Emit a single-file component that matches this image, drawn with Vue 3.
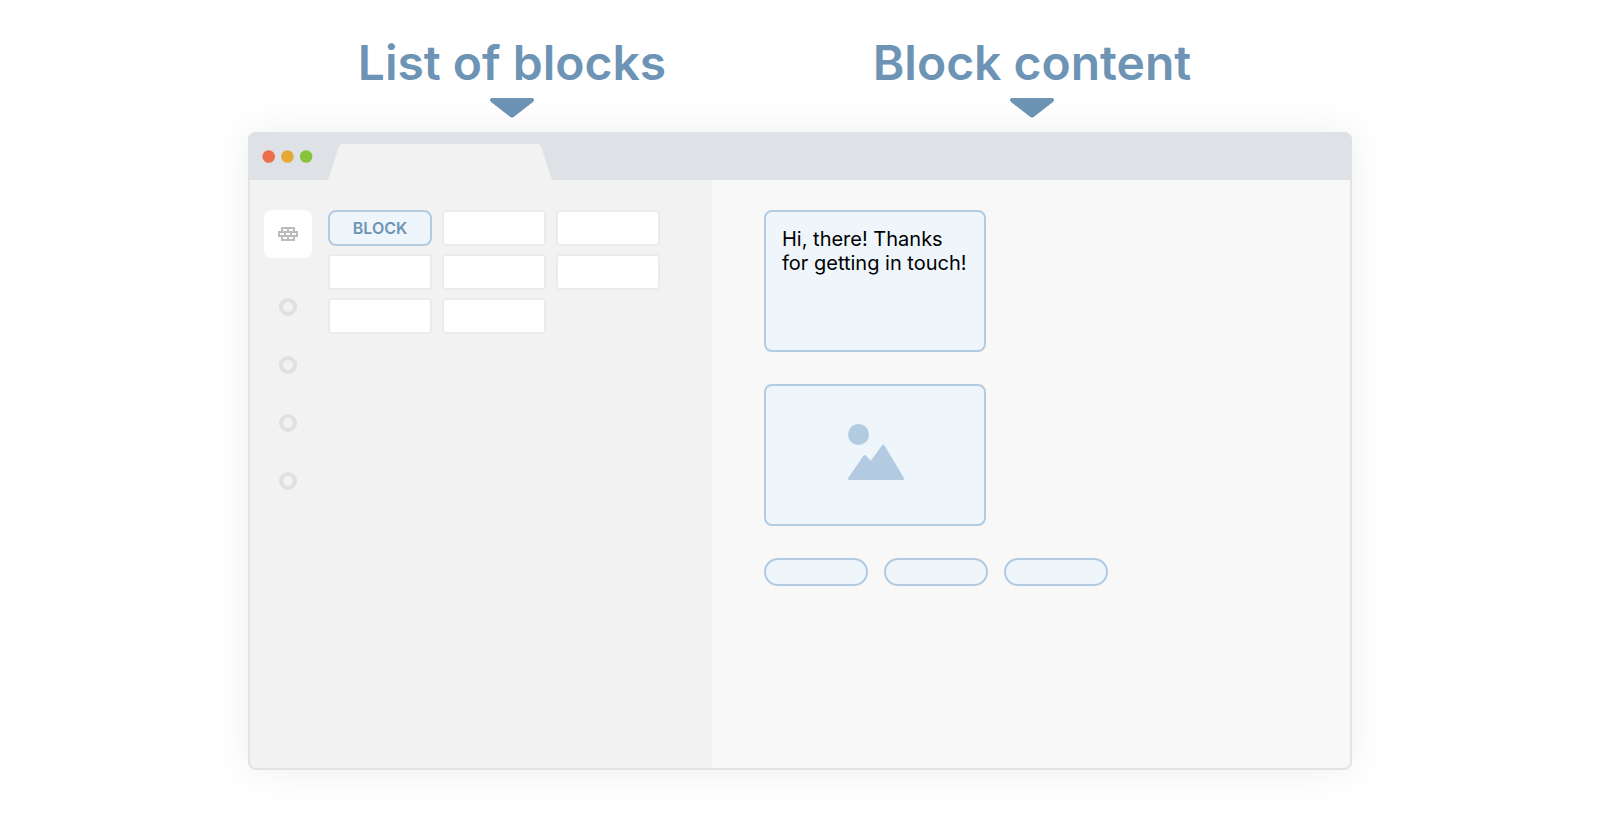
<script setup>
const headings = ['List of blocks', 'Block content']
const blocks = ['BLOCK', '', '', '', '', '', '', '']
const sections = [1, 2, 3, 4]
const replies = [1, 2, 3]
</script>

<template>
  <main class="page">
    <header class="headings">
      <div v-for="title in headings" :key="title" class="heading">
        <h2>{{ title }}</h2>
        <svg class="pointer" viewBox="0 0 44 20" aria-hidden="true">
          <path d="M2 0H42Q44 0 44 2Q44 3 43 4L24 18.700Q22 20.300 20 18.700L1 4Q0 3 0 2Q0 0 2 0Z" />
        </svg>
      </div>
    </header>

    <section class="window">
      <div class="titlebar">
        <svg class="lights" viewBox="0 0 51 13" aria-hidden="true">
          <circle cx="6.700" cy="6.500" r="6.300" fill="#eb6f4b" />
          <circle cx="25.400" cy="6.500" r="6.300" fill="#e7a936" />
          <circle cx="44.100" cy="6.500" r="6.300" fill="#86c43c" />
        </svg>
        <svg class="tab" viewBox="0 0 224 36" aria-hidden="true">
          <path d="M0 36L10.800 3Q11.800 0 15 0H209Q212.200 0 213.200 3L224 36Z" />
        </svg>
      </div>

      <div class="body">
        <div class="left">
          <nav class="rail" aria-label="Sections">
            <button class="tile" type="button" aria-label="Blocks">
              <svg viewBox="0 0 20 14" aria-hidden="true">
                <path fill-rule="evenodd" d="M3 0H17V4H20V10H17V14H3V10H0V4H3ZM5 2V4H9V2ZM11 2V4H15V2ZM2 6V8H6V6ZM8 6V8H12V6ZM14 6V8H18V6ZM5 10V12H9V10ZM11 10V12H15V10Z" />
              </svg>
            </button>
            <button v-for="n in sections" :key="n" class="ring" type="button" :aria-label="`Section ${n}`"></button>
          </nav>
          <div class="blocks">
            <button
              v-for="(label, i) in blocks"
              :key="i"
              type="button"
              class="block"
              :class="{ active: label }"
              :aria-label="label || `Block ${i + 1}`"
            >{{ label }}</button>
          </div>
        </div>

        <div class="right">
          <article class="card message">Hi, there! Thanks<br>for getting in touch!</article>
          <figure class="card image">
            <svg viewBox="0 0 56 56" aria-hidden="true">
              <circle cx="10.500" cy="10.500" r="10.500" />
              <path d="M1.500 54.500L16.700 32.500L23 39L35.200 22.300L54.500 54.500Z" stroke-width="3" stroke-linejoin="round" />
            </svg>
          </figure>
          <div class="replies">
            <button v-for="n in replies" :key="n" class="pill" type="button" :aria-label="`Reply ${n}`"></button>
          </div>
        </div>
      </div>
    </section>
  </main>
</template>

<style>
body {
  margin: 0;
  background: #fff;
}
</style>

<style scoped>
* {
  box-sizing: border-box;
}
button {
  padding: 0;
  font: inherit;
  cursor: pointer;
}
.page {
  display: flex;
  flex-direction: column;
  align-items: center;
  min-height: 100vh;
  padding: 35px 0 46px;
  font-family: Inter, "Liberation Sans", sans-serif;
}
.headings {
  display: grid;
  grid-template-columns: 528fr 512fr 64fr;
  width: 69%;
  margin-bottom: 14px;
}
.heading {
  display: flex;
  flex-direction: column;
  align-items: center;
  gap: 7px;
}
h2 {
  margin: 0;
  font-size: 48px;
  line-height: 56px;
  font-weight: 600;
  color: #6d94b5;
  white-space: nowrap;
}
.pointer {
  width: 44px;
  height: 20px;
  fill: #6d94b5;
}
.window {
  flex: 1;
  display: flex;
  flex-direction: column;
  width: 69%;
  border-radius: 8px;
  background: #e3e3e3;
  box-shadow: 0 0 40px rgba(0, 0, 0, 0.07);
  overflow: hidden;
}
.titlebar {
  display: flex;
  align-items: flex-end;
  gap: 15px;
  height: 48px;
  padding-left: 14px;
  background: #dee1e6;
}
.lights {
  width: 51px;
  height: 13px;
  margin-bottom: 17px;
}
.tab {
  width: 224px;
  height: 36px;
  fill: #f2f2f2;
}
.body {
  flex: 1;
  display: grid;
  grid-template-columns: 42fr 58fr;
  margin: 0 2px 2px;
  border-radius: 0 0 6px 6px;
  overflow: hidden;
}
.left {
  display: flex;
  align-items: flex-start;
  gap: 16px;
  padding: 30px 14px;
  background: #f2f2f2;
}
.rail {
  display: flex;
  flex-direction: column;
  align-items: center;
  gap: 40px;
}
.tile {
  display: grid;
  place-items: center;
  width: 48px;
  height: 48px;
  border: 0;
  border-radius: 8px;
  background: #fff;
}
.tile svg {
  width: 20px;
  height: 14px;
  fill: #bbb;
}
.ring {
  width: 18px;
  height: 18px;
  border: 4px solid #e0e0e0;
  border-radius: 50%;
  background: transparent;
}
.blocks {
  display: grid;
  grid-template-columns: repeat(3, 104px);
  grid-auto-rows: 36px;
  gap: 8px 10px;
}
.block {
  border: 2px solid #ebebeb;
  border-radius: 4px;
  background: #fff;
}
.block.active {
  border-color: #b3cbe0;
  border-radius: 8px;
  background: #eef5fb;
  color: #6d94b5;
  font-size: 16px;
  font-weight: 600;
}
.right {
  display: flex;
  flex-direction: column;
  align-items: flex-start;
  gap: 32px;
  padding: 30px 52px;
  background: #f8f8f8;
}
.card {
  width: 222px;
  height: 142px;
  margin: 0;
  border: 2px solid #b3cbe0;
  border-radius: 8px;
  background: #eef5fb;
}
.message {
  padding: 15px 16px;
  font-size: 20px;
  line-height: 24px;
  color: #000;
  white-space: nowrap;
}
.image {
  display: grid;
  place-items: center;
  padding: 0 0 6px 2px;
}
.image svg {
  width: 56px;
  height: 56px;
  fill: #b3cbe0;
  stroke: #b3cbe0;
  stroke-width: 0;
}
.replies {
  display: flex;
  gap: 16px;
}
.pill {
  width: 104px;
  height: 28px;
  border: 2px solid #b3cbe0;
  border-radius: 14px;
  background: #eef5fb;
}
</style>
